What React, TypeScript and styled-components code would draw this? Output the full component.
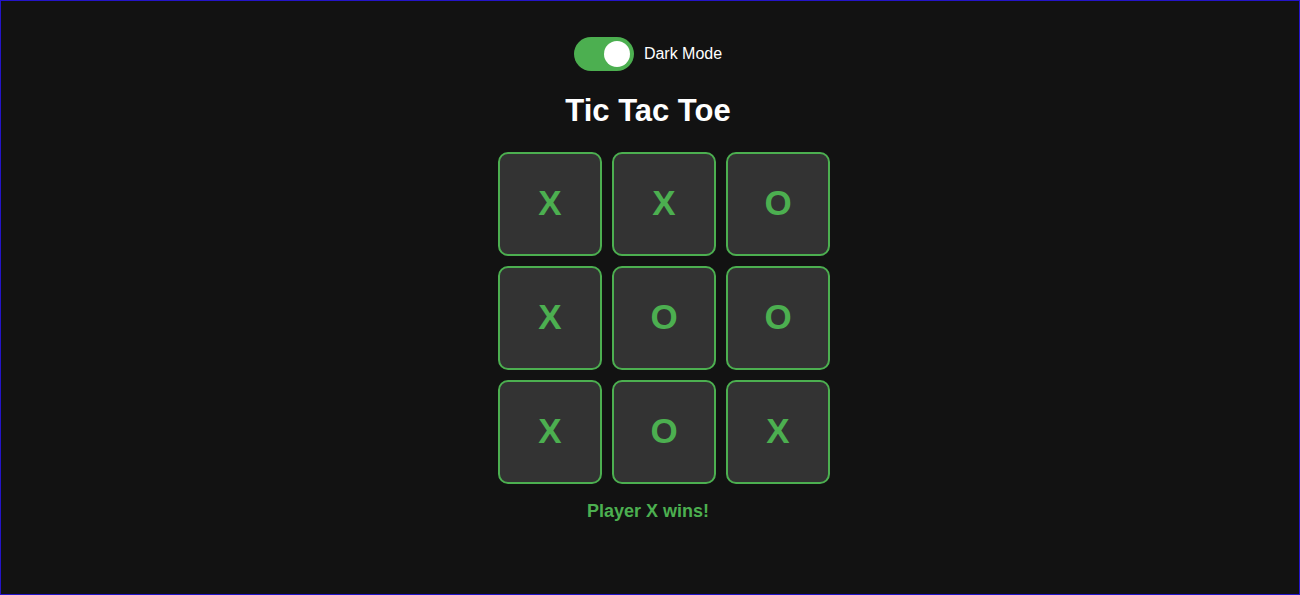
import React, { useState } from "react";
import styled, { createGlobalStyle } from "styled-components";

const Global = createGlobalStyle`
  html, body { margin: 0; padding: 0; background: #121212; }
  body { font-family: "Liberation Sans", Arial, sans-serif; }
  * { box-sizing: border-box; }
`;

const Page = styled.div`
  min-height: 100vh;
  height: 595px;
  border: 1px solid #2414c8;
  background: #121212;
  color: #ffffff;
  display: flex;
  flex-direction: column;
  align-items: center;
  padding: 36px 4px 0 0;
`;

const ToggleRow = styled.label`
  display: flex;
  align-items: center;
  gap: 10px;
  font-size: 16px;
  color: #ffffff;
  cursor: pointer;
`;

const Track = styled.span<{ $on: boolean }>`
  position: relative;
  width: 60px;
  height: 34px;
  border-radius: 17px;
  background: ${(p) => (p.$on ? "#4caf50" : "#ccc")};
  display: inline-block;
`;

const Knob = styled.span<{ $on: boolean }>`
  position: absolute;
  top: 4px;
  left: ${(p) => (p.$on ? "30px" : "4px")};
  width: 26px;
  height: 26px;
  border-radius: 50%;
  background: #ffffff;
`;

const Title = styled.h1`
  margin: 22px 0 23px;
  font-size: 31px;
  font-weight: bold;
  color: #ffffff;
`;

const Board = styled.div`
  display: grid;
  grid-template-columns: repeat(3, 104px);
  grid-auto-rows: 104px;
  gap: 10px;
  margin-left: 32px;
`;

const Cell = styled.button`
  width: 104px;
  height: 104px;
  background: #333333;
  border: 2px solid #4caf50;
  border-radius: 10px;
  color: #4caf50;
  font-family: "Liberation Sans", Arial, sans-serif;
  font-size: 35px;
  font-weight: bold;
  display: flex;
  align-items: center;
  justify-content: center;
  padding: 0 0 3px;
  cursor: pointer;
`;

const Status = styled.p`
  margin: 17px 0 0;
  font-size: 18px;
  font-weight: bold;
  color: #4caf50;
`;

const cells = ["X", "X", "O", "X", "O", "O", "X", "O", "X"];

export default function App() {
  const [dark, setDark] = useState(true);
  return (
    <>
      <Global />
      <Page>
        <ToggleRow onClick={() => setDark(!dark)}>
          <Track $on={dark}>
            <Knob $on={dark} />
          </Track>
          Dark Mode
        </ToggleRow>
        <Title>Tic Tac Toe</Title>
        <Board>
          {cells.map((c, i) => (
            <Cell key={i}>{c}</Cell>
          ))}
        </Board>
        <Status>Player X wins!</Status>
      </Page>
    </>
  );
}
